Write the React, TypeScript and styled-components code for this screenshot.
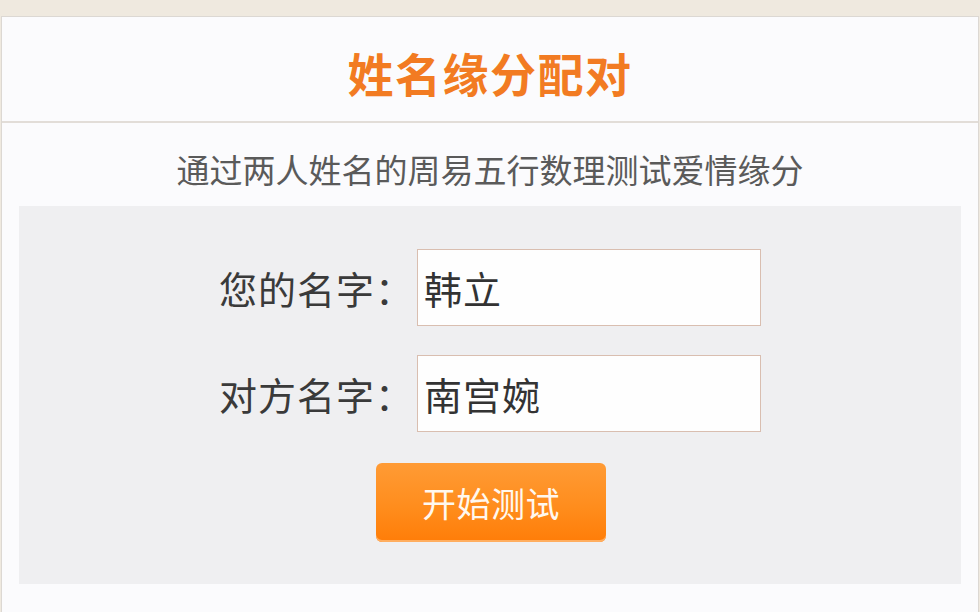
import React from "react";
import styled, { createGlobalStyle } from "styled-components";

const GlobalStyle = createGlobalStyle`
  html, body {
    margin: 0;
    padding: 0;
    background: #fbfbfd;
  }
  body {
    font-family: "Noto Sans CJK SC", "Noto Sans", sans-serif;
  }
`;

const Page = styled.div`
  width: 980px;
  height: 612px;
  overflow: hidden;
  background: #efe9df;
  padding-top: 16px;
  box-sizing: border-box;
`;

const Card = styled.div`
  margin: 0 1px;
  height: 100%;
  background: #fbfbfd;
  border: 1px solid #dcd8d3;
  border-bottom: none;
  box-sizing: border-box;
`;

const Header = styled.div`
  height: 106px;
  display: flex;
  align-items: center;
  justify-content: center;
  padding-top: 6px;
  box-sizing: border-box;
  border-bottom: 2px solid #e2ddd8;
`;

const Title = styled.h1`
  margin: 0;
  font-size: 46px;
  font-weight: 700;
  color: #f27b22;
  letter-spacing: 1.5px;
`;

const Subtitle = styled.p`
  margin: 0;
  padding: 25px 0 16px;
  line-height: 42px;
  font-size: 33px;
  color: #5a5a5a;
  text-align: center;
`;

const Panel = styled.div`
  margin: 0 17px;
  background: #efeff1;
  padding: 43px 0 42px;
  display: flex;
  flex-direction: column;
  align-items: center;
`;

const Row = styled.div<{ $gap?: number }>`
  display: flex;
  align-items: center;
  margin-top: ${(p) => p.$gap ?? 0}px;
`;

const Label = styled.label`
  width: 198px;
  font-size: 38px;
  color: #3a3a3a;
  white-space: nowrap;
  letter-spacing: 1px;
`;

const Field = styled.div`
  width: 344px;
  height: 77px;
  box-sizing: border-box;
  border: 1.5px solid #d9beb0;
  background: #fefefe;
  padding-left: 6px;
  display: flex;
  align-items: center;
  font-size: 38px;
  letter-spacing: 1px;
  color: #333;
`;

const StartButton = styled.button`
  margin-top: 31px;
  margin-left: 2px;
  width: 230px;
  height: 79px;
  border: none;
  border-radius: 6px;
  background: linear-gradient(#ff9b35, #ff8d1d 55%, #ff7d08);
  box-shadow: inset 0 -2px 0 #ffae60;
  color: #fff8ef;
  font-family: inherit;
  font-size: 34px;
  letter-spacing: 0.5px;
  cursor: pointer;
`;

export default function App() {
  return (
    <>
      <GlobalStyle />
      <Page>
        <Card>
          <Header>
            <Title>姓名缘分配对</Title>
          </Header>
          <Subtitle>通过两人姓名的周易五行数理测试爱情缘分</Subtitle>
          <Panel>
            <Row>
              <Label>您的名字：</Label>
              <Field>韩立</Field>
            </Row>
            <Row $gap={29}>
              <Label>对方名字：</Label>
              <Field>南宫婉</Field>
            </Row>
            <StartButton>开始测试</StartButton>
          </Panel>
        </Card>
      </Page>
    </>
  );
}
